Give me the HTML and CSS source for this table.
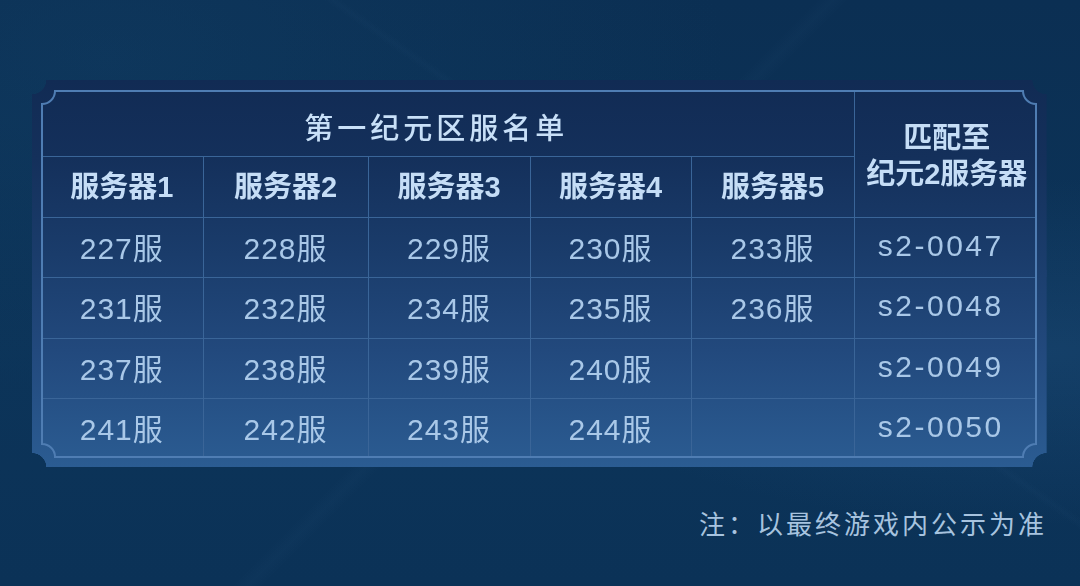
FILE: index.html
```html
<!DOCTYPE html>
<html lang="zh-CN">
<head>
<meta charset="utf-8">
<title>第一纪元区服名单</title>
<link rel="stylesheet" href="styles.css">
</head>
<body>
<div class="page">
  <div class="panel">
    <div class="frame">
      <svg class="frame-line" width="996" height="368" viewBox="0 0 996 368" aria-hidden="true">
        <path d="M14 1 H982 A13 13 0 0 0 995 14 V354 A13 13 0 0 0 982 367 H14 A13 13 0 0 0 1 354 V14 A13 13 0 0 0 14 1 Z" fill="none" stroke="#4f7db3" stroke-width="2"/>
      </svg>
      <table class="grid">
        <colgroup>
          <col class="c1"><col class="c2"><col class="c3"><col class="c4"><col class="c5"><col class="c6">
        </colgroup>
        <tr class="r-title">
          <th colspan="5" class="title">第一纪元区服名单</th>
          <th rowspan="2" class="match">匹配至<br>纪元2服务器</th>
        </tr>
        <tr class="r-head">
          <th>服务器1</th><th>服务器2</th><th>服务器3</th><th>服务器4</th><th>服务器5</th>
        </tr>
        <tr class="r-data">
          <td>227服</td><td>228服</td><td>229服</td><td>230服</td><td>233服</td><td class="sid">s2-0047</td>
        </tr>
        <tr class="r-data r-tall">
          <td>231服</td><td>232服</td><td>234服</td><td>235服</td><td>236服</td><td class="sid">s2-0048</td>
        </tr>
        <tr class="r-data">
          <td>237服</td><td>238服</td><td>239服</td><td>240服</td><td></td><td class="sid">s2-0049</td>
        </tr>
        <tr class="r-data">
          <td>241服</td><td>242服</td><td>243服</td><td>244服</td><td></td><td class="sid">s2-0050</td>
        </tr>
      </table>
    </div>
  </div>
  <p class="note">注：以最终游戏内公示为准</p>
</div>
</body>
</html>
```
FILE: styles.css
```css
html, body {
  margin: 0;
  padding: 0;
}

body {
  width: 1080px;
  height: 586px;
  overflow: hidden;
  background-color: #0c3358;
  background-image:
    linear-gradient(135deg, rgba(255,255,255,0) 49%, rgba(120,170,220,0.025) 50%, rgba(255,255,255,0) 51%),
    linear-gradient(35deg, rgba(255,255,255,0) 60.5%, rgba(120,170,220,0.02) 61%, rgba(255,255,255,0) 61.5%),
    radial-gradient(ellipse at 97% 60%, rgba(40,90,140,0.3), rgba(0,0,0,0) 35%),
    radial-gradient(ellipse at 10% 10%, rgba(20,70,110,0.3), rgba(0,0,0,0) 45%),
    linear-gradient(180deg, #0b2f53 0%, #0c3459 60%, #0b3257 100%);
  font-family: "Liberation Sans", "Noto Sans CJK SC", sans-serif;
}

.page {
  padding-top: 80px;
}

.panel {
  margin-left: 32px;
  width: 1015px;
  height: 387px;
  box-sizing: border-box;
  padding: 10px 10px 9px 9px;
  background: linear-gradient(180deg, #112b54 0%, #14305b 20%, #1a3c6b 45%, #22497d 70%, #2b5c92 100%);
  -webkit-mask:
    radial-gradient(circle at 0 0, transparent 14px, #000 14.5px) top left / 51% 51% no-repeat,
    radial-gradient(circle at 100% 0, transparent 14px, #000 14.5px) top right / 51% 51% no-repeat,
    radial-gradient(circle at 0 100%, transparent 14px, #000 14.5px) bottom left / 51% 51% no-repeat,
    radial-gradient(circle at 100% 100%, transparent 14px, #000 14.5px) bottom right / 51% 51% no-repeat;
  mask:
    radial-gradient(circle at 0 0, transparent 14px, #000 14.5px) top left / 51% 51% no-repeat,
    radial-gradient(circle at 100% 0, transparent 14px, #000 14.5px) top right / 51% 51% no-repeat,
    radial-gradient(circle at 0 100%, transparent 14px, #000 14.5px) bottom left / 51% 51% no-repeat,
    radial-gradient(circle at 100% 100%, transparent 14px, #000 14.5px) bottom right / 51% 51% no-repeat;
}

.frame {
  position: relative;
  width: 996px;
  height: 368px;
}

.frame-line {
  position: absolute;
  left: 0;
  top: 0;
  pointer-events: none;
}

.grid {
  width: 996px;
  height: 368px;
  border-collapse: collapse;
  table-layout: fixed;
}

.c1 { width: 162px; }
.c2 { width: 165px; }
.c3 { width: 162px; }
.c4 { width: 161px; }
.c5 { width: 163px; }
.c6 { width: 183px; }

.grid th,
.grid td {
  padding: 0;
  text-align: center;
  vertical-align: middle;
  border: 1px solid #3a6598;
}

.grid tr:first-child th { border-top: none; }
.grid tr:last-child td { border-bottom: none; }
.grid tr > :first-child { border-left: none; }
.grid tr > :last-child { border-right: none; }
.grid .r-head th:last-child { border-right: 1px solid #3a6598; }

.r-title { height: 66px; }
.r-head { height: 61px; }
.r-data { height: 60px; }
.r-tall { height: 61px; }

.grid .title {
  font-family: "Noto Sans CJK SC", sans-serif;
  font-size: 29px;
  font-weight: 500;
  letter-spacing: 4px;
  color: #c8e0f8;
  padding-top: 6px;
  padding-right: 22px;
}

.grid .r-head th,
.grid .match {
  font-family: "Liberation Sans", "Noto Sans CJK SC", sans-serif;
  font-size: 29px;
  font-weight: 700;
  color: #c5ddf6;
}

.grid .r-head th {
  padding-bottom: 5px;
}

.grid .match {
  line-height: 36px;
  padding-left: 2px;
  padding-top: 6px;
}

.grid .r-data td {
  font-size: 30px;
  letter-spacing: 1px;
  color: #a9c8e8;
  padding-bottom: 3px;
}

.grid .r-data td.sid {
  letter-spacing: 2.5px;
  padding-right: 10px;
}

.note {
  margin: 38px 33px 0 0;
  text-align: right;
  font-family: "Noto Sans CJK SC", sans-serif;
  font-size: 26px;
  letter-spacing: 3px;
  line-height: 36px;
  color: #a7c3df;
}
```
